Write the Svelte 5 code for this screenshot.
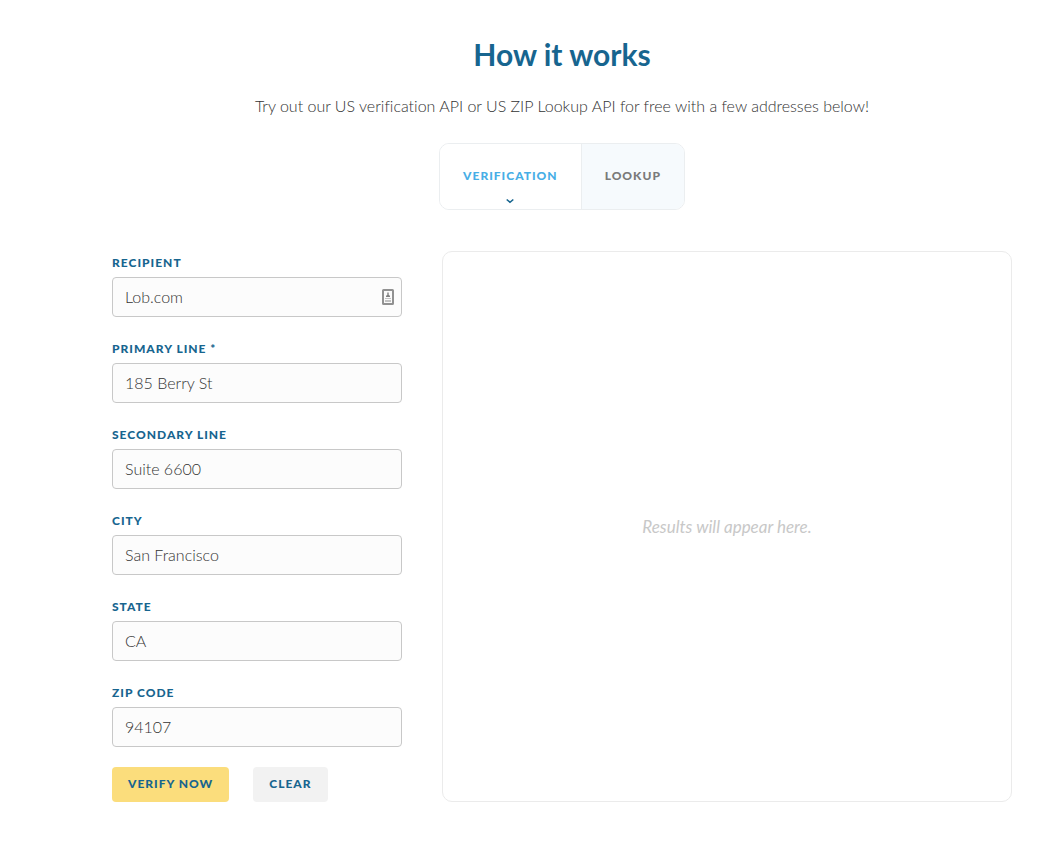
<script lang="ts">
	const modes = [
		{ id: 'verification', label: 'Verification' },
		{ id: 'lookup', label: 'Lookup' }
	];

	const initial = [
		{ id: 'recipient', label: 'Recipient', value: 'Lob.com' },
		{ id: 'primary-line', label: 'Primary line *', value: '185 Berry St' },
		{ id: 'secondary-line', label: 'Secondary line', value: 'Suite 6600' },
		{ id: 'city', label: 'City', value: 'San Francisco' },
		{ id: 'state', label: 'State', value: 'CA' },
		{ id: 'zip-code', label: 'Zip code', value: '94107' }
	];

	let mode = $state('verification');
	let fields = $state(initial);

	function clear() {
		for (const field of fields) field.value = '';
	}
</script>

<main class="demo">
	<header class="intro">
		<h2>How it works</h2>
		<p>Try out our US verification API or US ZIP Lookup API for free with a few addresses below!</p>
	</header>

	<div class="tabs" role="tablist">
		{#each modes as tab (tab.id)}
			<button
				class="tab"
				class:active={mode === tab.id}
				type="button"
				role="tab"
				aria-selected={mode === tab.id}
				onclick={() => (mode = tab.id)}
			>
				{tab.label}
				{#if mode === tab.id}
					<svg class="chevron" width="8" height="6" viewBox="0 0 8 6" fill="none" stroke="currentColor" stroke-width="1.6" aria-hidden="true">
						<path d="M.7 1.5 4 4.3 7.3 1.5" />
					</svg>
				{/if}
			</button>
		{/each}
	</div>

	<div class="columns">
		<form onsubmit={(e) => e.preventDefault()}>
			{#each fields as field (field.id)}
				<div class="field">
					<label for={field.id}>{field.label}</label>
					<div class="control">
						<input id={field.id} type="text" bind:value={field.value} />
						{#if field.id === 'recipient'}
							<svg class="contact" width="12" height="16" viewBox="0 0 12 16" aria-hidden="true">
								<rect x="1" y="1" width="10" height="14" rx="0.5" fill="#fafafa" stroke="#919191" stroke-width="2" />
								<path d="M5.3 3.5h1.4V6l1.3.8V8H4V6.800l1.300-.8z" fill="#808080" />
								<path d="M3 9h6v1H3zM3 11h6v2H3z" fill="#c2c2c2" />
							</svg>
						{/if}
					</div>
				</div>
			{/each}
			<div class="actions">
				<button class="verify" type="submit">Verify now</button>
				<button class="clear" type="button" onclick={clear}>Clear</button>
			</div>
		</form>

		<section class="results" aria-live="polite">
			<p>Results will appear here.</p>
		</section>
	</div>
</main>

<style>
	:global(body) {
		margin: 0;
		background: #fff;
	}

	.demo {
		padding: 34px 44px 40px 112px;
		font-family: Lato, 'Open Sans', sans-serif;
		font-size: 16px;
		line-height: 24px;
		font-variant-ligatures: no-common-ligatures;
		color: #333;
	}

	.intro {
		text-align: center;
	}

	h2 {
		margin: 0 0 20px;
		font-size: 30px;
		line-height: 40px;
		font-weight: 700;
		color: #17658f;
	}

	p {
		margin: 0;
	}

	.intro p {
		font-weight: 300;
	}

	.tabs {
		display: flex;
		width: fit-content;
		margin: 25px auto 41px;
		border: 1px solid #ebeef0;
		border-radius: 10px;
		overflow: hidden;
	}

	button {
		border: 0;
		font: inherit;
		font-size: 12px;
		font-weight: 900;
		letter-spacing: 1px;
		text-transform: uppercase;
		cursor: pointer;
	}

	.tab {
		position: relative;
		height: 65px;
		padding: 0 23px 2px;
		background: #f6fafd;
		color: #7a7a7a;
	}

	.tab + .tab {
		border-left: 1px solid #ebeef0;
	}

	.tab.active {
		background: #fff;
		color: #47aee6;
	}

	.chevron {
		position: absolute;
		left: calc(50% - 4px);
		bottom: 5px;
		color: #17658f;
	}

	.columns {
		display: grid;
		grid-template-columns: 290px 1fr;
		gap: 40px;
	}

	.field {
		margin-bottom: 20px;
	}

	label {
		display: block;
		margin-bottom: 2px;
		font-size: 12px;
		font-weight: 900;
		letter-spacing: 1px;
		text-transform: uppercase;
		color: #17658f;
	}

	.control {
		position: relative;
	}

	input {
		display: block;
		box-sizing: border-box;
		width: 100%;
		height: 40px;
		padding: 0 12px 2px;
		border: 1px solid #c8c8c8;
		border-radius: 4px;
		background: #fcfcfc;
		font: inherit;
		font-weight: 300;
		color: #333;
	}

	.contact {
		position: absolute;
		top: 12px;
		right: 8px;
	}

	.actions {
		display: flex;
		gap: 24px;
	}

	.actions button {
		height: 35px;
		padding: 0 16px 2px;
		border-radius: 4px;
		color: #17658f;
	}

	.actions .verify {
		background: #fbdd7c;
	}

	.actions .clear {
		background: #f2f2f2;
	}

	.results {
		display: flex;
		align-items: center;
		justify-content: center;
		border: 1px solid #ebebeb;
		border-radius: 10px;
		font-size: 17px;
		font-style: italic;
		color: #c8c8c8;
	}
</style>
